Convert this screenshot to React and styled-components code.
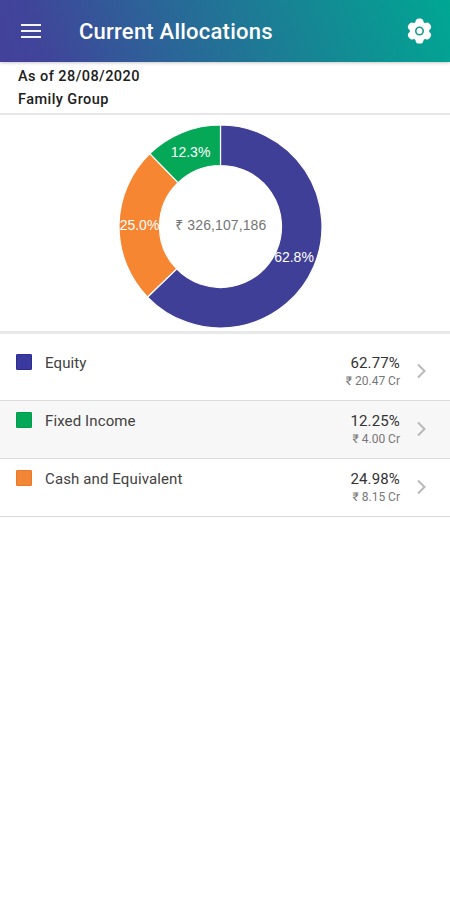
import React from "react";
import styled, { createGlobalStyle } from "styled-components";

const GlobalStyle = createGlobalStyle`
  * {
    box-sizing: border-box;
  }

  body {
    margin: 0;
    background: #fff;
    font-family: Roboto, "Noto Sans", sans-serif;
  }
`;

const Page = styled.div`
  display: flex;
  flex-direction: column;
  min-height: 100vh;
  background: #fff;
`;

const Header = styled.header`
  display: flex;
  align-items: center;
  height: 62px;
  padding: 0 18px 0 21px;
  background: linear-gradient(70deg, #43419b 0%, #40459a 10%, #2a6698 38%, #178494 66%, #00a793 100%);
  box-shadow: 0 1px 3px rgba(0, 0, 0, 0.22);
`;

const MenuButton = styled.div`
  display: flex;
  flex-direction: column;
  gap: 4px;
  width: 20px;

  & > span {
    height: 2px;
    background: #f4f5fb;
  }
`;

const Title = styled.h1`
  flex: 1;
  margin: 0 0 0 38px;
  padding-top: 2px;
  color: #fff;
  font-size: 22px;
  font-weight: 500;
  line-height: 28px;
  letter-spacing: 0.23px;
`;

const Info = styled.div`
  height: 53px;
  padding: 3px 18px 0;
  border-bottom: 2px solid #e7e7e7;
  color: #202020;
  font-size: 14.5px;
  font-weight: 500;
  line-height: 23px;
  letter-spacing: 0.44px;
`;

const ChartPanel = styled.div`
  display: flex;
  justify-content: center;
  height: 219px;
  padding-top: 9px;
  padding-right: 9px;
  border-bottom: 3px solid #e9e9e9;

  & text {
    font-family: "Liberation Sans", "Noto Sans", sans-serif;
    font-size: 14px;
    text-anchor: middle;
  }
`;

const Row = styled.div`
  display: flex;
  height: ${(props) => props.$height}px;
  padding: ${(props) => props.$top}px 22px 0 16px;
  background: ${(props) => (props.$shaded ? "#f7f7f7" : "#fff")};
  border-bottom: 1px solid #dcdcdc;
`;

const Swatch = styled.div`
  width: 16px;
  height: 16px;
  margin: 1px 13px 0 0;
  border: 1px solid ${(props) => props.$border};
  border-radius: 1px;
  background: ${(props) => props.$color};
`;

const Name = styled.div`
  flex: 1;
  color: #424242;
  font-size: 15px;
  line-height: 20px;
  letter-spacing: 0.12px;
`;

const Figures = styled.div`
  text-align: right;

  & > .percent {
    color: #333;
    font-size: 15px;
    line-height: 20px;
    letter-spacing: 0.15px;
  }

  & > .amount {
    color: #777;
    font-size: 12px;
    line-height: 17px;
  }
`;

const Chevron = styled.svg`
  margin: 10px 0 0 15px;
`;

const TOTAL = "₹ 326,107,186";

const allocations = [
  { name: "Equity", percent: 62.77, amount: "₹ 20.47 Cr", color: "#403f97", swatch: "#3939a0", border: "#2d2d91" },
  { name: "Fixed Income", percent: 12.25, amount: "₹ 4.00 Cr", color: "#05a857", swatch: "#05a857", border: "#009c4e" },
  { name: "Cash and Equivalent", percent: 24.98, amount: "₹ 8.15 Cr", color: "#f68632", swatch: "#f28637", border: "#eb7729" },
];

// the chart goes clockwise from the top in this order
const slices = [
  { ...allocations[0], label: "62.8%", x: 176, y: 138 },
  { ...allocations[2], label: "25.0%", x: 21.5, y: 106 },
  { ...allocations[1], label: "12.3%", x: 72.5, y: 33 },
];

const CENTER = 102.5;
const OUTER = 101.5;
const INNER = 61;

function point(radius, percent) {
  const angle = (percent / 100) * Math.PI * 2;
  return `${CENTER + radius * Math.sin(angle)} ${CENTER - radius * Math.cos(angle)}`;
}

function slicePath(start, end) {
  const large = end - start > 50 ? 1 : 0;
  return `M${point(OUTER, start)} A${OUTER} ${OUTER} 0 ${large} 1 ${point(OUTER, end)} L${point(INNER, end)} A${INNER} ${INNER} 0 ${large} 0 ${point(INNER, start)} Z`;
}

function Donut() {
  let start = 0;
  return (
    <svg width="205" height="205" viewBox="0 0 205 205">
      {slices.map((slice) => {
        const from = start;
        start += slice.percent;
        return <path key={slice.name} d={slicePath(from, start)} fill={slice.color} stroke="#fff" strokeWidth="1.2" />;
      })}
      {slices.map((slice) => (
        <text key={slice.name} x={slice.x} y={slice.y} fill="#fff">
          {slice.label}
        </text>
      ))}
      <text x="102.8" y="106" fill="#757575" letterSpacing="0.1">
        {TOTAL}
      </text>
    </svg>
  );
}

function Gear() {
  return (
    <svg width="25" height="26" viewBox="-12.5 -13 25 26">
      <g fill="#fff">
        <circle r="9.8" />
        {[0, 60, 120].map((angle) => (
          <rect key={angle} x="-4" y="-12.5" width="8" height="25" rx="3.6" transform={`rotate(${angle})`} />
        ))}
      </g>
      <circle r="3.7" fill="none" stroke="#159b91" strokeWidth="1.6" />
    </svg>
  );
}

export default function App() {
  return (
    <Page>
      <GlobalStyle />
      <Header>
        <MenuButton>
          <span />
          <span />
          <span />
        </MenuButton>
        <Title>Current Allocations</Title>
        <Gear />
      </Header>
      <Info>
        <div>As of 28/08/2020</div>
        <div>Family Group</div>
      </Info>
      <ChartPanel>
        <Donut />
      </ChartPanel>
      {allocations.map((item, index) => (
        <Row key={item.name} $height={index === 0 ? 67 : 58} $top={index === 0 ? 19 : 10} $shaded={index === 1}>
          <Swatch $color={item.swatch} $border={item.border} />
          <Name>{item.name}</Name>
          <Figures>
            <div className="percent">{item.percent.toFixed(2)}%</div>
            <div className="amount">{item.amount}</div>
          </Figures>
          <Chevron width="13" height="16" viewBox="0 0 13 16">
            <path d="M3 1.5 L9.5 8 L3 14.5" fill="none" stroke="#b9b9b9" strokeWidth="2" />
          </Chevron>
        </Row>
      ))}
    </Page>
  );
}
